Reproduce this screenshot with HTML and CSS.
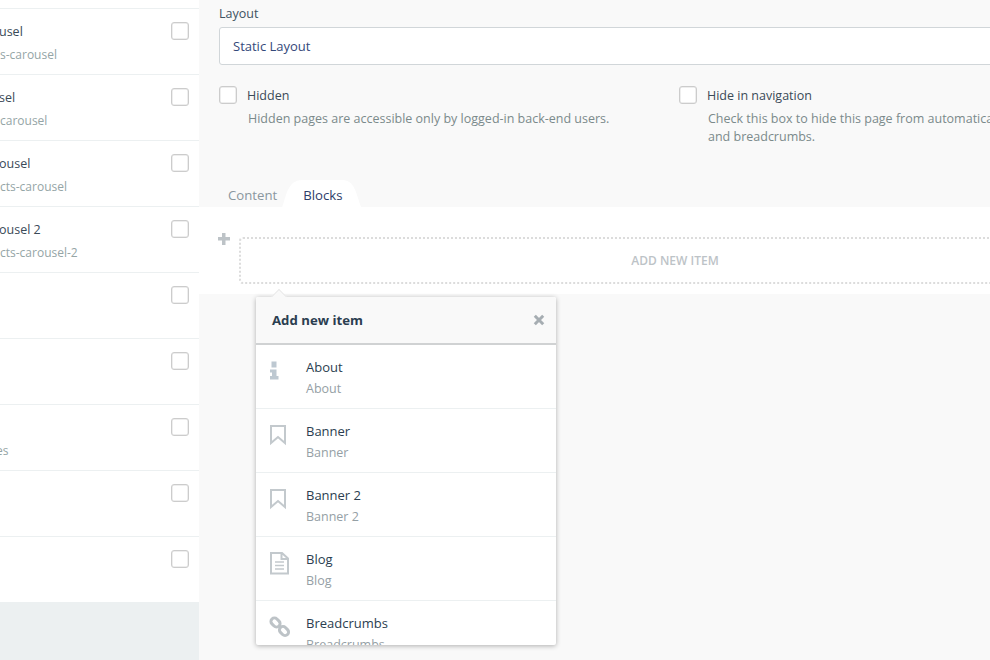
FILE: index.html
```html
<!DOCTYPE html>
<html lang="en">
<head>
<meta charset="utf-8">
<title>Layout editor</title>
<link rel="stylesheet" href="styles.css">
</head>
<body>
<div class="app">
  <aside class="sidebar">
    <ul class="list">
      <li class="row"><div class="row-text"><div class="t">usel</div><div class="s">s-carousel</div></div><span class="check"></span></li>
      <li class="row"><div class="row-text"><div class="t">sel</div><div class="s">carousel</div></div><span class="check"></span></li>
      <li class="row"><div class="row-text"><div class="t">ousel</div><div class="s">cts-carousel</div></div><span class="check"></span></li>
      <li class="row"><div class="row-text"><div class="t">ousel 2</div><div class="s">cts-carousel-2</div></div><span class="check"></span></li>
      <li class="row"><div class="row-text"></div><span class="check"></span></li>
      <li class="row"><div class="row-text"></div><span class="check"></span></li>
      <li class="row"><div class="row-text"><div class="t">&nbsp;</div><div class="s nudge">es</div></div><span class="check"></span></li>
      <li class="row"><div class="row-text"></div><span class="check"></span></li>
      <li class="row"><div class="row-text"></div><span class="check"></span></li>
    </ul>
    <div class="side-foot"></div>
  </aside>
  <main class="main">
    <div class="form">
      <label class="label">Layout</label>
      <div class="select">Static Layout</div>
      <div class="options">
        <div class="option">
          <span class="check"></span>
          <div class="opt-text">
            <div class="opt-title">Hidden</div>
            <div class="opt-help">Hidden pages are accessible only by logged-in back-end users.</div>
          </div>
        </div>
        <div class="option">
          <span class="check"></span>
          <div class="opt-text">
            <div class="opt-title">Hide in navigation</div>
            <div class="opt-help">Check this box to hide this page from automatically generated menus and breadcrumbs.</div>
          </div>
        </div>
      </div>
    </div>
    <div class="tabs">
      <span class="tab">Content</span>
      <span class="tab active">Blocks</span>
    </div>
    <div class="panel">
      <svg class="plus" viewBox="0 0 14 14" width="14" height="14"><path d="M5 1h3.500v4H13v3.500H8.500V13H5V8.500H1V5h4z"/></svg>
      <div class="drop">ADD NEW ITEM</div>
    </div>
    <div class="popover">
      <span class="arrow"></span>
      <div class="pop-head">
        <strong>Add new item</strong>
        <svg class="close" viewBox="0 0 12 12" width="12" height="12"><path d="M1.800 1.800l8.400 8.400M10.200 1.800l-8.400 8.400"/></svg>
      </div>
      <div class="pop-list">
        <div class="item">
          <svg class="ico" viewBox="0 0 20 24" width="20" height="24"><path class="fill" d="M2.500 2.500h5V8.500h-5zM1 10.500h6.500V17h2v3.500H1V17h2v-3.500H1z"/></svg>
          <div><div class="i-t">About</div><div class="i-s">About</div></div>
        </div>
        <div class="item">
          <svg class="ico" viewBox="0 0 20 24" width="20" height="24"><path class="line" d="M2 3h14v17l-7-6-7 6z"/></svg>
          <div><div class="i-t">Banner</div><div class="i-s">Banner</div></div>
        </div>
        <div class="item">
          <svg class="ico" viewBox="0 0 20 24" width="20" height="24"><path class="line" d="M2 3h14v17l-7-6-7 6z"/></svg>
          <div><div class="i-t">Banner 2</div><div class="i-s">Banner 2</div></div>
        </div>
        <div class="item">
          <svg class="ico" viewBox="0 0 20 24" width="20" height="24"><path class="line" d="M2 2h11l6 5.500V22.500H2zM12.500 2v6H19"/><path class="rule" d="M6 11h9M6 14.500h9M6 18h9"/></svg>
          <div><div class="i-t">Blog</div><div class="i-s">Blog</div></div>
        </div>
        <div class="item">
          <svg class="ico" viewBox="0 0 20 24" width="20" height="24"><g class="chain"><rect x="-5" y="-3.500" width="10" height="7" rx="3.500" transform="translate(6.500 7.500) rotate(45)"/><rect x="-5" y="-3.500" width="10" height="7" rx="3.500" transform="translate(15 16) rotate(45)"/></g></svg>
          <div><div class="i-t">Breadcrumbs</div><div class="i-s">Breadcrumbs</div></div>
        </div>
      </div>
    </div>
  </main>
</div>
</body>
</html>
```
FILE: styles.css
```css
* { box-sizing: border-box; }
html, body { margin: 0; height: 100%; overflow: hidden; }
body { font-family: "Open Sans", "Noto Sans", sans-serif; font-size: 13px; color: #2b3e50; background: #f9f9f9; }
.app { display: flex; width: 990px; height: 660px; overflow: hidden; }
.sidebar { flex: 0 0 199px; display: flex; flex-direction: column; background: #fff; overflow: hidden; }
.list { list-style: none; margin: 8px 0 0; padding: 0; }
.row { height: 66px; border-top: 1px solid #ecf0f1; display: flex; justify-content: space-between; padding: 13px 10px 0 0; }
.t { font-size: 12.500px; line-height: 18px; color: #3a4a57; margin: 1px 0 0 -1px; }
.s { font-size: 12px; line-height: 18px; color: #95a5a6; margin-top: 5px; }
.s.nudge { margin-left: -4px; }
.check { flex: none; width: 18px; height: 18px; background: #fff; border: 1px solid #ccc; border-radius: 3px; box-shadow: inset 0 0 0 .5px #ddd; }
.side-foot { flex: 1; background: #ecf0f1; }
.main { flex: 1; position: relative; min-width: 0; overflow: hidden; }
.form { width: 920px; padding: 6px 0 0 20px; }
.label { display: block; line-height: 16px; color: #405261; font-size: 12.500px; }
.select { margin-top: 5px; height: 38px; background: #fff; border: 1px solid #d1d6d9; border-radius: 3px; padding: 0 13px; line-height: 36px; color: #34497a; }
.options { display: grid; grid-template-columns: 460px 1fr; margin-top: 21px; }
.option { display: flex; gap: 10px; }
.opt-title { margin-top: 1px; line-height: 18px; font-size: 12.500px; color: #3a4a57; }
.opt-help { margin: 5px 0 0 1px; line-height: 18px; font-size: 12.500px; color: #7b8a8b; }
.tabs { display: flex; margin-top: 34px; height: 27px; padding-left: 14px; }
.tab { padding: 0 15px; line-height: 31px; font-size: 13.200px; color: #8a979f; }
.tab.active { position: relative; z-index: 0; color: #2d3d69; margin-left: -4px; }
.tab.active::before { content: ""; position: absolute; z-index: -1; left: -6px; top: 0; width: 79px; height: 27px; background: #fff; clip-path: path("M0 27 C4 17 5 0 20 0 H60 C73 0 74 15 79 27 Z"); }
.panel { display: flex; align-items: flex-start; width: 912px; height: 87px; background: #fff; padding: 30px 0 0 18px; gap: 8px; }
.plus { fill: #bdc3c7; flex: none; margin-top: -5px; }
.drop { flex: 1; height: 47px; border: 2px dotted #dcdcdc; border-radius: 4px; text-align: center; line-height: 43px; font-size: 12px; font-weight: 600; color: #bdc3c7; }
.popover { position: absolute; left: 57px; top: 297px; width: 300px; height: 348px; background: #fff; box-shadow: 0 1px 5px rgba(0,0,0,.3); border-radius: 2px; }
.arrow { position: absolute; left: 15px; top: -8px; width: 16px; height: 16px; background: #f9f9f9; transform: rotate(45deg) scale(.7); border: 1px solid #e4e4e4; border-right: 0; border-bottom: 0; }
.pop-head { position: relative; height: 48px; background: #f9f9f9; border-bottom: 2px solid #d0d2d3; display: flex; align-items: center; justify-content: space-between; padding: 0 11px 0 16px; border-radius: 2px 2px 0 0; }
.pop-head strong { font-size: 13.200px; font-weight: 700; color: #2b3e50; }
.close { fill: none; stroke: #a6adb2; stroke-width: 3; }
.pop-list { height: 300px; overflow: hidden; }
.item { height: 64px; border-bottom: 1px solid #ecf0f1; display: flex; padding: 13px 0 0 13px; gap: 17px; }
.ico { flex: none; margin-top: 1px; overflow: visible; }
.ico .fill { fill: #bdc8d1; }
.ico .line { fill: none; stroke: #c3c9cd; stroke-width: 2; }
.ico .rule { fill: none; stroke: #c3c9cd; stroke-width: 1.500; }
.ico .chain { fill: none; stroke: #bdc3c7; stroke-width: 3; }
.i-t { line-height: 18px; color: #2b3e50; }
.i-s { margin-top: 4px; line-height: 18px; font-size: 12.500px; color: #95a0a5; }
```
